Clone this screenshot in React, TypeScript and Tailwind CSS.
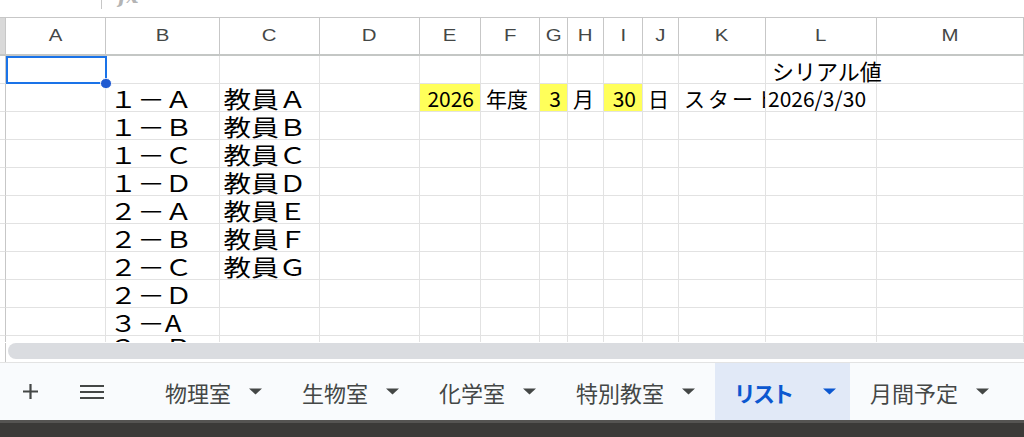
import React from "react";

type CellKind = "big" | "mid" | "num" | "date" | "serial";

interface CellData {
    t: string;
    kind: CellKind;
    yellow?: boolean;
    clip?: boolean;
    wide?: boolean;
}

const headers = ["", "A", "B", "C", "D", "E", "F", "G", "H", "I", "J", "K", "L", "M"];

const bigB = ["１－Ａ", "１－Ｂ", "１－Ｃ", "１－Ｄ", "２－Ａ", "２－Ｂ", "２－Ｃ", "２－Ｄ", "３－A", "３－Ｂ"];
const bigC = ["教員Ａ", "教員Ｂ", "教員Ｃ", "教員Ｄ", "教員Ｅ", "教員Ｆ", "教員Ｇ"];

function buildRows(): Record<number, CellData>[] {
    const rows: Record<number, CellData>[] = [];
    for (let r = 0; r < 11; r++) rows.push({});
    rows[0][12] = {t: "シリアル値", kind: "serial"};
    rows[1][5] = {t: "2026", kind: "num", yellow: true};
    rows[1][6] = {t: "年度", kind: "mid"};
    rows[1][7] = {t: "3", kind: "num", yellow: true};
    rows[1][8] = {t: "月", kind: "mid"};
    rows[1][9] = {t: "30", kind: "num", yellow: true};
    rows[1][10] = {t: "日", kind: "mid"};
    rows[1][11] = {t: "スタート", kind: "mid", clip: true, wide: true};
    rows[1][12] = {t: "2026/3/30", kind: "date"};
    bigB.forEach((t, i) => (rows[i + 1][2] = {t, kind: "big"}));
    bigC.forEach((t, i) => (rows[i + 1][3] = {t, kind: "big"}));
    return rows;
}

const rows = buildRows();

function CellText({c, last}: { c: CellData; last?: boolean }) {
    if (c.kind === "big") {
        return (
            <span className={`inline-block origin-bottom-left scale-x-[1.2] pl-[3px] ${last ? "pb-[5px]" : "pb-[1px]"} text-[23px] leading-none whitespace-nowrap text-black`}>
                {c.t}
            </span>
        );
    }
    if (c.kind === "num") {
        return <span className="w-full text-right pr-[6px] pb-[2px] text-[21px] leading-none text-black">{c.t}</span>;
    }
    if (c.kind === "date") {
        return <span className="pl-[2px] pb-[2px] text-[21px] leading-none whitespace-nowrap text-black">{c.t}</span>;
    }
    if (c.kind === "serial") {
        return <span className="pl-[6px] pb-[2px] text-[22px] leading-none whitespace-nowrap text-black">{c.t}</span>;
    }
    return (
        <span className={`pl-[5px] pb-[2px] text-[21px] leading-none whitespace-nowrap text-black ${c.wide ? "tracking-[3px]" : ""}`}>
            {c.t}
        </span>
    );
}

function Arrow({blue}: { blue?: boolean }) {
    return (
        <svg width="13" height="7" viewBox="0 0 13 7" className="shrink-0">
            <path d="M0 0.5 L13 0.5 L6.5 6.5 Z" fill={blue ? "#0b57d0" : "#444746"}/>
        </svg>
    );
}

const tabs = [
    {name: "物理室", w: "w-[137px]"},
    {name: "生物室", w: "w-[137px]"},
    {name: "化学室", w: "w-[137px]"},
    {name: "特別教室", w: "w-[159px]"},
    {name: "リスト", w: "w-[135px]", active: true},
    {name: "月間予定", w: "w-[162px]"},
];

export default function App() {
    return (
        <div className="w-[1024px] h-[437px] overflow-hidden flex flex-col bg-white font-['Noto_Sans_CJK_JP','Noto_Sans',sans-serif]">
            {/* formula bar remnant */}
            <div className="h-[18px] shrink-0 flex border-b border-[#c7c7c7] overflow-hidden">
                <div className="w-[101px] shrink-0"/>
                <div className="w-px h-[9px] bg-[#c7c7c7]"/>
                <span className="ml-[16px] -mt-[19px] text-[20px] italic font-semibold text-[#b4b4b4] font-['DejaVu_Serif',serif]">fx</span>
            </div>

            {/* grid */}
            <div className="relative h-[324px] shrink-0 overflow-hidden">
                <div className="grid grid-cols-[6px_100px_114px_100px_100px_61px_59px_28px_36px_39px_36px_87px_111px_1fr] grid-rows-[38px_repeat(11,28px)]">
                    {headers.map((h, i) => (
                        <div
                            key={"h" + i}
                            className={`flex items-center justify-center border-r border-b-2 border-r-[#c7c7c7] border-b-[#c4c7c5] text-[17px] text-[#444746] font-['Liberation_Sans',Arial,sans-serif] ${i === 0 ? "bg-[#d9d9d9]" : "bg-white"}`}
                        >
                            <span className="inline-block scale-x-[1.2]">{h}</span>
                        </div>
                    ))}
                    {rows.map((row, r) =>
                        headers.map((_, c) => {
                            const cell = row[c];
                            return (
                                <div
                                    key={r + "-" + c}
                                    className={`flex items-end border-r border-b ${c === 0 ? "border-r-[#c7c7c7]" : "border-r-[#e2e2e2]"} border-b-[#e2e2e2] ${cell?.yellow ? "bg-[#ffff5a]" : ""} ${cell?.clip ? "overflow-hidden" : ""}`}
                                >
                                    {cell && <CellText c={cell} last={r === 10}/>}
                                </div>
                            );
                        })
                    )}
                </div>
                {/* selection on A1 */}
                <div className="absolute left-[6px] top-[38px] w-[101px] h-[28px] border-2 border-[#1a73e8] pointer-events-none"/>
                <div className="absolute left-[100px] top-[60px] w-[12px] h-[11px] rounded-full bg-[#1f5ad1] border border-white"/>
            </div>

            {/* horizontal scrollbar */}
            <div className="h-[20px] shrink-0 flex items-start pt-px bg-white">
                <div className="w-[6px] h-full border-r border-[#c7c7c7] shrink-0"/>
                <div className="ml-[2px] h-[16px] flex-1 rounded-l-full bg-[#dadce0]"/>
            </div>

            {/* sheet tabs */}
            <div className="h-[58px] shrink-0 flex items-stretch bg-[#f9fbfd] border-t border-[#e3e3e3]">
                <div className="w-[60px] flex items-center justify-center">
                    <svg width="17" height="17" viewBox="0 0 17 17">
                        <path d="M8.5 1 V16 M1 8.5 H16" stroke="#444746" strokeWidth="2.2"/>
                    </svg>
                </div>
                <div className="w-[64px] flex items-center justify-center">
                    <svg width="24" height="16" viewBox="0 0 24 16">
                        <path d="M0 2 H24 M0 8 H24 M0 14 H24" stroke="#444746" strokeWidth="2.2"/>
                    </svg>
                </div>
                <div className="w-[21px]"/>
                {tabs.map(t => (
                    <div
                        key={t.name}
                        className={`${t.w} shrink-0 flex items-center pl-5 gap-[18px] ${t.active ? "bg-[#e1e9f7]" : ""}`}
                    >
                        <span
                            className={`text-[22px] leading-none whitespace-nowrap ${t.active ? "font-bold text-[#0b57d0] [font-feature-settings:'palt']" : "text-[#444746]"}`}
                        >
                            {t.name}
                        </span>
                        {t.active ? <span className="ml-[12px]"><Arrow blue/></span> : <Arrow/>}
                    </div>
                ))}
            </div>

            {/* dark desktop strip */}
            <div className="flex-1 bg-[#3b3a38] border-t-[3px] border-[#555452]"/>
        </div>
    );
}
